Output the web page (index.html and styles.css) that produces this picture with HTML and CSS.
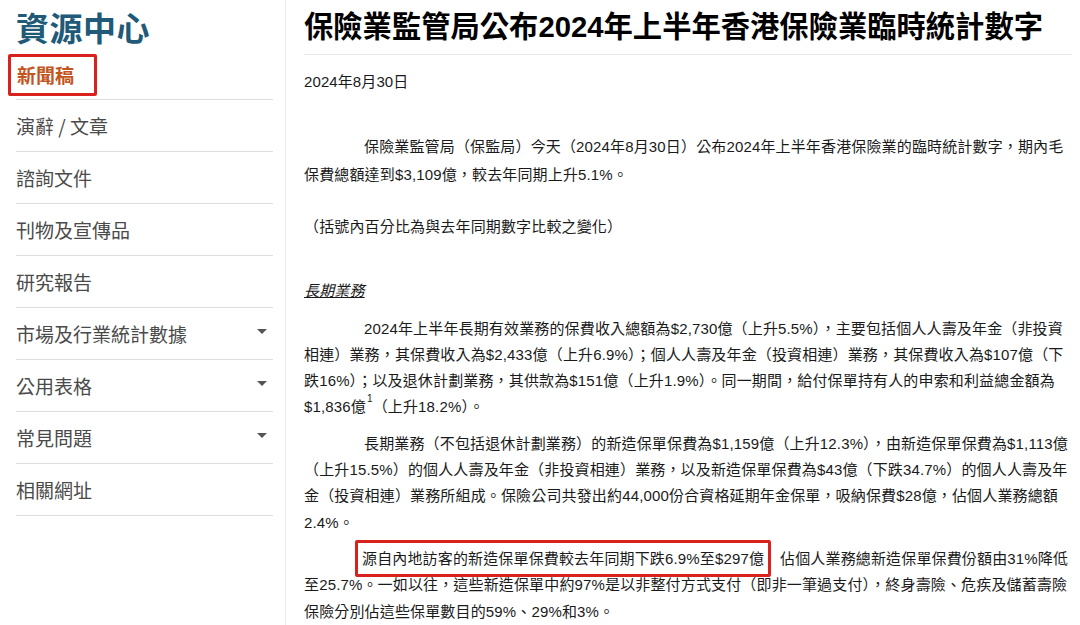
FILE: index.html
```html
<!DOCTYPE html>
<html lang="zh-Hant">
<head>
<meta charset="utf-8">
<title>保險業監管局公布2024年上半年香港保險業臨時統計數字</title>
<link rel="stylesheet" href="styles.css">
</head>
<body>
<div class="page">
  <aside class="sidebar">
    <h2 class="side-title">資源中心</h2>
    <ul class="nav">
      <li class="nav-item active"><span class="active-box">新聞稿</span></li>
      <li class="nav-item">演辭 / 文章</li>
      <li class="nav-item">諮詢文件</li>
      <li class="nav-item">刊物及宣傳品</li>
      <li class="nav-item">研究報告</li>
      <li class="nav-item has-sub">市場及行業統計數據<span class="caret"></span></li>
      <li class="nav-item has-sub">公用表格<span class="caret"></span></li>
      <li class="nav-item has-sub">常見問題<span class="caret"></span></li>
      <li class="nav-item">相關網址</li>
    </ul>
  </aside>
  <main class="main">
    <h1 class="title">保險業監管局公布2024年上半年香港保險業臨時統計數字</h1>
    <p class="date">2024年8月30日</p>
    <p class="para p1 indent">保險業監管局（保監局）今天（2024年8月30日）公布2024年上半年香港保險業的臨時統計數字，期內毛保費總額達到$3,109億，較去年同期上升5.1%。</p>
    <p class="para p-note">（括號內百分比為與去年同期數字比較之變化）</p>
    <p class="para p-head"><em class="section">長期業務</em></p>
    <p class="para indent">2024年上半年長期有效業務的保費收入總額為$2,730億（上升5.5%），主要包括個人人壽及年金（非投資相連）業務，其保費收入為$2,433億（上升6.9%）；個人人壽及年金（投資相連）業務，其保費收入為$107億（下跌16%）；以及退休計劃業務，其供款為$151億（上升1.9%）。同一期間，給付保單持有人的申索和利益總金額為$1,836億<sup class="note">1</sup>（上升18.2%）。</p>
    <p class="para indent">長期業務（不包括退休計劃業務）的新造保單保費為$1,159億（上升12.3%），由新造保單保費為$1,113億（上升15.5%）的個人人壽及年金（非投資相連）業務，以及新造保單保費為$43億（下跌34.7%）的個人人壽及年金（投資相連）業務所組成。保險公司共發出約44,000份合資格延期年金保單，吸納保費$28億，佔個人業務總額2.4%。</p>
    <p class="para indent"><span class="mark">源自內地訪客的新造保單保費較去年同期下跌6.9%至$297億</span>佔個人業務總新造保單保費份額由31%降低至25.7%。一如以往，這些新造保單中約97%是以非整付方式支付（即非一筆過支付），終身壽險、危疾及儲蓄壽險保險分別佔這些保單數目的59%、29%和3%。</p>
  </main>
</div>
</body>
</html>
```
FILE: styles.css
```css
html, body {
  margin: 0;
  padding: 0;
  background: #fff;
}
body {
  font-family: "Liberation Sans", "Noto Sans CJK TC", sans-serif;
  color: #1a1a1a;
  overflow: hidden;
  height: 625px;
}
.page {
  display: flex;
  align-items: stretch;
  height: 625px;
}
.sidebar {
  width: 257px;
  flex: none;
  padding: 7px 12px 0 16px;
  border-right: 1px solid #ececec;
  margin-top: 0;
  font-family: "Noto Sans CJK TC", sans-serif;
}
.side-title {
  margin: 0;
  font-size: 33px;
  line-height: 40px;
  font-weight: 700;
  color: #205a78;
  letter-spacing: 0.5px;
}
.nav {
  list-style: none;
  margin: 0;
  padding: 0;
}
.nav-item {
  position: relative;
  height: 51px;
  line-height: 51px;
  border-bottom: 1px solid #dedede;
  font-size: 19px;
  color: #4a4a4a;
}
.nav-item.active {
  box-sizing: border-box;
  height: 53px;
  line-height: normal;
  padding-top: 7px;
}
.active-box {
  display: block;
  box-sizing: border-box;
  width: 89px;
  height: 42px;
  margin: 0 0 0 -8px;
  padding-left: 6px;
  border: 3px solid #d9211e;
  border-radius: 2px;
  font-weight: 700;
  color: #c2561d;
  line-height: 36px;
}
.caret {
  position: absolute;
  right: 6px;
  top: 21px;
  width: 0;
  height: 0;
  border-left: 5px solid transparent;
  border-right: 5px solid transparent;
  border-top: 5px solid #555;
}
.main {
  flex: 1;
  padding: 0 8px 0 18px;
  min-width: 0;
}
.title {
  margin: 9px 0 0;
  font-family: "Liberation Sans", "Noto Sans CJK TC", sans-serif;
  font-size: 29.3px;
  line-height: 35px;
  font-weight: 700;
  color: #000;
  padding-bottom: 10px;
  border-bottom: 1px solid #e6e6e6;
  width: 768px;
  white-space: nowrap;
}
.date {
  margin: 14px 0 0;
  font-size: 15px;
  line-height: 26px;
  letter-spacing: 0.1px;
}
.para {
  margin: 0 0 10px;
  font-size: 15px;
  line-height: 26.3px;
  width: 768px;
  letter-spacing: 0.15px;
  color: #1a1a1a;
}
.indent {
  text-indent: 60px;
}
.p1 {
  margin-top: 38px;
  line-height: 28px;
  margin-bottom: 25px;
}
.p-note {
  margin-bottom: 38px;
}
.p-head {
  margin-bottom: 11px;
}
.section {
  font-style: italic;
  text-decoration: underline;
}
.note {
  font-family: "Liberation Sans", sans-serif;
  font-size: 10px;
  line-height: 10px;
  vertical-align: top;
  margin-left: 1px;
}
.mark {
  border: 3px solid #d9211e;
  border-radius: 2px;
  padding: 7px 4px;
  margin-left: -9px;
  margin-right: 9px;
}
```
